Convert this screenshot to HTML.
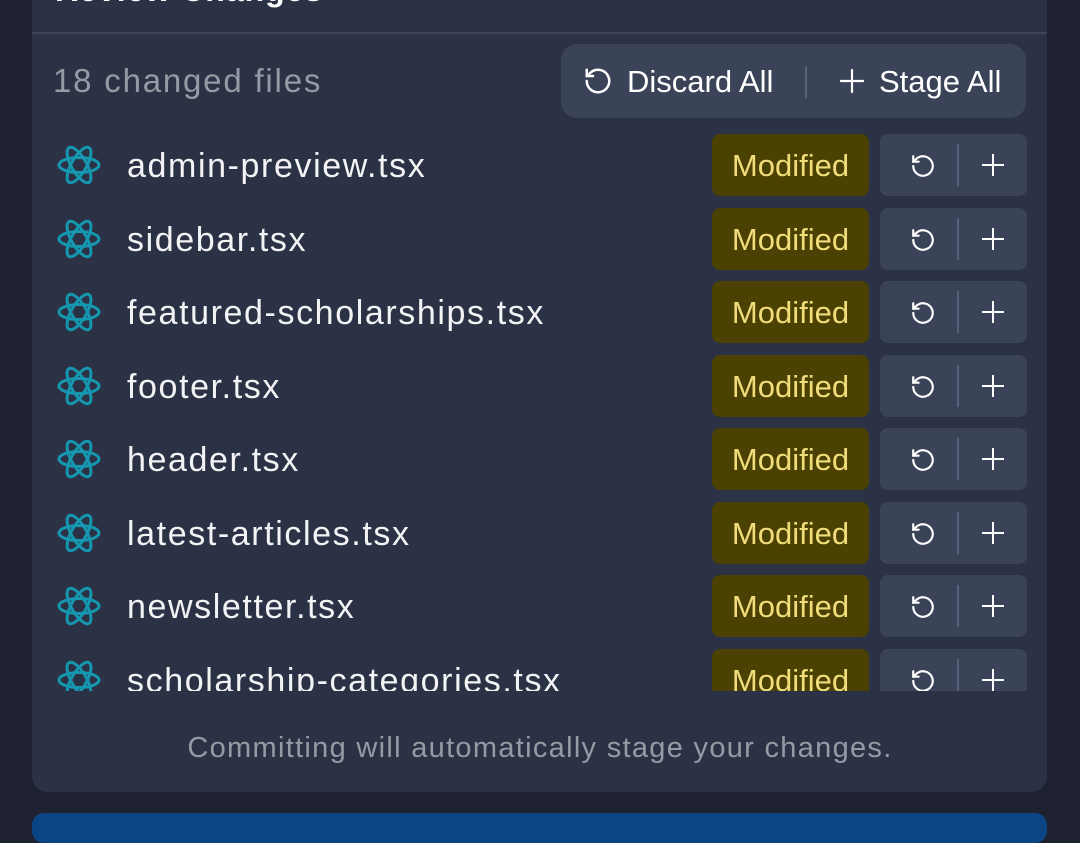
<!DOCTYPE html>
<html><head><style>
body{margin:0;width:1080px;height:822px;background:#1d2130;font-family:"Liberation Sans",sans-serif;overflow:hidden;position:relative}
.card{position:absolute;left:32px;top:-40px;width:1015px;height:832px;background:#2c3245;border-radius:16px}
.title{position:absolute;left:55px;top:-28px;font-size:32px;color:#fff;font-weight:bold;letter-spacing:1px}
.sep{position:absolute;left:32px;top:32px;width:1015px;height:2px;background:#3d4559}
.count{position:absolute;left:53px;top:62px;font-size:33px;color:#959aa5;letter-spacing:1.8px}
.bar{position:absolute;left:561px;top:44px;width:465px;height:74px;background:#3b4358;border-radius:16px;color:#fff;font-size:31px}
.bar span{position:absolute;top:20px}
.list{position:absolute;left:32px;top:128px;width:1015px;height:563px;overflow:hidden}
.row{position:absolute;left:0;width:1015px;height:62px}
.row .name{position:absolute;left:95px;top:13px;font-size:34px;color:#f2f3f5;letter-spacing:1.6px}
.row svg.r{position:absolute;left:24px;top:9px}
.badge{position:absolute;left:680px;top:0;width:157px;height:62px;background:#4b4103;border-radius:8px;color:#f0dc7a;font-size:31px;text-align:center;line-height:64px}
.btns{position:absolute;left:848px;top:0;width:147px;height:62px;background:#3b4358;border-radius:8px}
.btns .d{position:absolute;left:77px;top:10px;width:2px;height:42px;background:#59617a}
.foot{position:absolute;left:0;width:1080px;top:732px;text-align:center;font-size:29px;color:#959aa5;letter-spacing:1.3px}
.blue{position:absolute;left:32px;top:813px;width:1015px;height:30px;background:#0b4584;border-radius:12px}
</style></head><body>
<div class="card"></div>
<div class="title">Review Changes</div>
<div class="sep"></div>
<div class="count">18 changed files</div>
<div class="bar">
<svg style="position:absolute;left:22px;top:22px" width="30" height="30" viewBox="0 0 24 24" fill="none" stroke="#fff" stroke-width="2" stroke-linecap="round"><path d="M3 12a9 9 0 1 0 3-6.7L3 8"/><path d="M3 3v5h5"/></svg>
<span style="left:66px">Discard All</span>
<div style="position:absolute;left:244px;top:22px;width:2px;height:32px;background:#5a6279"></div>
<svg style="position:absolute;left:278px;top:24px" width="26" height="26" viewBox="0 0 24 24" stroke="#fff" stroke-width="2"><path d="M12 1v22M1 12h22"/></svg>
<span style="left:318px">Stage All</span>
</div>
<div class="list">
</div>
<div class="foot">Committing will automatically stage your changes.</div>
<div class="blue"></div>
<script>
var n=["admin-preview.tsx","sidebar.tsx","featured-scholarships.tsx","footer.tsx","header.tsx","latest-articles.tsx","newsletter.tsx","scholarship-categories.tsx"];
var h="";
var atom='<svg class="r" width="46" height="44" viewBox="-23 -22 46 44" fill="none" stroke="#1597b0" stroke-width="3"><ellipse rx="20" ry="7.5"/><ellipse rx="20" ry="7.5" transform="rotate(60)"/><ellipse rx="20" ry="7.5" transform="rotate(120)"/></svg>';
var ic='<svg style="position:absolute;left:30px;top:19px" width="26" height="26" viewBox="0 0 24 24" fill="none" stroke="#fff" stroke-width="2" stroke-linecap="round"><path d="M3 12a9 9 0 1 0 3-6.7L3 8"/><path d="M3 3v5h5"/></svg><div class="d"></div><svg style="position:absolute;left:101px;top:19px" width="24" height="24" viewBox="0 0 24 24" stroke="#fff" stroke-width="2"><path d="M12 1v22M1 12h22"/></svg>';
n.forEach(function(x,i){h+='<div class="row" style="top:'+(6+i*73.5)+'px">'+atom+'<div class="name">'+x+'</div><div class="badge">Modified</div><div class="btns">'+ic+'</div></div>';});
document.querySelector('.list').innerHTML=h;
</script>
</body></html>
